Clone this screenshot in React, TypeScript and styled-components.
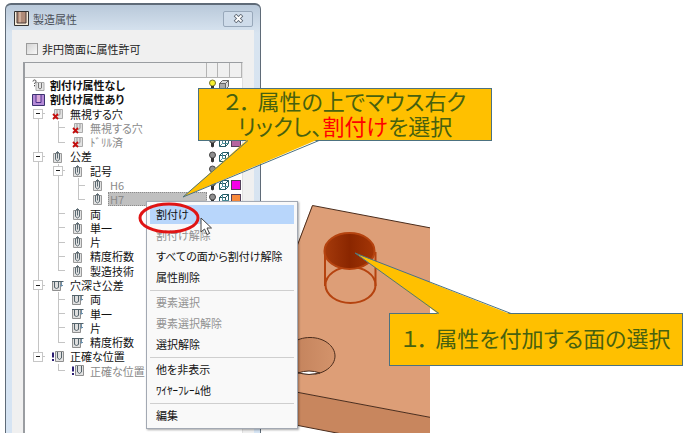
import React from 'react';
import styled, { createGlobalStyle, css } from 'styled-components';

const GlobalStyle = createGlobalStyle`
  * { box-sizing: border-box; }
  body { margin: 0; background: #fff; }
  body, button, input {
    font-family: 'Noto Sans CJK JP', 'Liberation Sans', sans-serif;
    font-size: 11px;
    font-feature-settings: 'palt';
  }
`;

const Stage = styled.main`
  position: relative;
  display: flex;
  align-items: stretch;
  min-height: 433px;
  padding: 3px 0 0 5px;
  overflow: hidden;
`;

/* ---------- dialog ---------- */

const Dialog = styled.section`
  flex: 0 0 256px;
  display: flex;
  flex-direction: column;
  padding: 0 6px;
  border: 1px solid #5f6b78;
  border-top-width: 2px;
  border-bottom: 0;
  border-radius: 6px 6px 0 0;
  background: linear-gradient(#b9c9da 0, #d8e4f0 28px, #d6e4f3 100%);
`;

const TitleBar = styled.header`
  display: flex;
  align-items: center;
  gap: 4px;
  height: 25px;
  padding: 2px 1px 0 2px;
  color: #4b5058;
`;

const Title = styled.h1`
  flex: 1;
  margin: 0;
  font-size: 11px;
  font-weight: 400;
`;

const CloseButton = styled.button`
  display: grid;
  place-items: center;
  width: 30px;
  height: 16px;
  padding: 0;
  border: 1px solid #98a8ba;
  border-radius: 2px;
  background: #cfdcea;
`;

const DialogBody = styled.div`
  flex: 1;
  display: flex;
  flex-direction: column;
  padding: 0 11px;
  background: #f0f0f0;
`;

const CheckLabel = styled.label`
  display: flex;
  align-items: center;
  gap: 4px;
  height: 32px;
  padding: 6px 0 0 3px;
  color: #222;
`;

const CheckBox = styled.input`
  appearance: none;
  width: 12px;
  height: 12px;
  margin: 0;
  border: 1px solid #9b9b9b;
  background: linear-gradient(135deg, #d4d4d4, #f8f8f8);
`;

const TreePanel = styled.div`
  flex: 1;
  border: 2px solid #9a9da1;
  border-top-width: 1px;
  border-right: 1px solid #e0e0e0;
  border-bottom: 0;
  background: #fff;
`;

const columns = css`
  display: grid;
  grid-template-columns: 1fr 11px 12px 12px;
`;

const TreeHeader = styled.div`
  ${columns}
  height: 15px;
  background: #f0f0f0;
  border-bottom: 1px solid #b4b4b4;
`;

const HeaderCell = styled.span`
  border-right: 1px solid #b4b4b4;
`;

const Tree = styled.ul`
  display: grid;
  grid-auto-rows: 1fr;
  min-height: 300px;
  margin: 0;
  padding: 0 0 0 3px;
  list-style: none;
`;

const Row = styled.li`
  ${columns}
  min-height: 0;
`;

const Node = styled.div`
  display: flex;
  align-items: stretch;
  min-width: 0;
`;

const IconCell = styled.span`
  flex: 0 0 20px;
  display: grid;
  place-items: center;
`;

const StateCell = styled.span`
  display: grid;
  place-items: center;
`;

type GuideKind = 'pass' | 'tee' | 'elbow' | 'none' | 'open' | 'openFirst' | 'openLast';

const line = 'linear-gradient(#c4c4c4, #c4c4c4)';
const branch = `${line} 10px 50% / 7px 1px no-repeat`;
const guides: Record<GuideKind, string> = {
  none: 'none',
  pass: `${line} 10px 0 / 1px 100% no-repeat`,
  tee: `${line} 10px 0 / 1px 100% no-repeat, ${branch}`,
  elbow: `${line} 10px 0 / 1px 50% no-repeat, ${branch}`,
  open: `${line} 10px 0 / 1px 100% no-repeat, ${branch}`,
  openFirst: `${line} 10px 100% / 1px 50% no-repeat, ${branch}`,
  openLast: `${line} 10px 0 / 1px 50% no-repeat, ${branch}`,
};

const Guide = styled.span<{ $kind: GuideKind }>`
  flex: 0 0 20px;
  display: grid;
  place-items: center;
  background: ${(p) => guides[p.$kind]};
`;

const Expander = styled.button`
  display: grid;
  place-items: center;
  width: 10px;
  height: 10px;
  padding: 0;
  border: 1px solid #c6c6c6;
  background: #fff;

  &::before {
    content: '';
    width: 4px;
    height: 1px;
    background: #222;
  }
`;

const Name = styled.span<{ $bold?: boolean; $dim?: boolean; $selected?: boolean }>`
  display: flex;
  align-items: center;
  flex: ${(p) => (p.$selected ? 1 : 'none')};
  height: 14px;
  padding-left: 2px;
  line-height: 14px;
  white-space: nowrap;
  font-weight: ${(p) => (p.$bold ? 700 : 400)};
  color: ${(p) => (p.$dim ? '#8a8a8a' : '#111')};
  ${(p) =>
    p.$selected &&
    css`
      background: #c0c0c0;
      outline: 1px dotted #8c8c8c;
      outline-offset: -1px;
    `}
`;

type IconKind = 'unset' | 'set' | 'ignore' | 'tolerance' | 'depth' | 'position';

function NodeIcon({ kind }: { kind: IconKind }) {
  switch (kind) {
    case 'unset':
      return (
        <svg width="13" height="13" viewBox="0 0 13 13" fill="none">
          <path d="M4 3.5h8v8H4z" fill="#e6e6e6" stroke="#aaa" />
          <path d="M6.5 4v5l1.5 1 1.5-1V4" stroke="#777" />
          <path d="M1 2.5C1 .5 4 .5 4 2.3 4 3.6 2.5 3.5 2.5 5M2.5 6v1.3" stroke="#444" />
        </svg>
      );
    case 'set':
      return (
        <svg width="13" height="13" viewBox="0 0 13 13" fill="none">
          <path d="M.5 1.5h12v11H.5z" fill="#b58ad6" stroke="#3c3270" />
          <path d="M4 2v7.5h5V2z" fill="#d9a9d8" />
          <path d="M4 2v7.5h5V2" stroke="#4c2f8c" />
        </svg>
      );
    case 'ignore':
      return (
        <svg width="12" height="12" viewBox="0 0 12 12" fill="none">
          <path d="M2.5 1.5h8v9h-8z" fill="#e2e2e2" stroke="#aaa" />
          <path d="M5 2v4.5l1.5 1L8 6.500V2" stroke="#999" />
          <path d="M1 6l5 5M6 6l-5 5" stroke="#c40d0d" strokeWidth="1.8" />
        </svg>
      );
    case 'tolerance':
      return (
        <svg width="10" height="12" viewBox="0 0 10 12" fill="none">
          <path d="M.5 2.500h8v9h-8z" fill="#e2e2e2" stroke="#9a9a9a" />
          <path d="M2.500 2.500v6l2 1.500 2-1.500v-6" stroke="#5b6a72" />
          <path d="M2.500 2.500l2-2 2 2M4.500 1v6.500" stroke="#5b6a72" />
        </svg>
      );
    case 'depth':
      return (
        <svg width="12" height="11" viewBox="0 0 12 11" fill="none">
          <path d="M.5 1.500h8v9h-8z" fill="#dedede" stroke="#8f8f8f" />
          <path d="M2.500 1.500v6l2 1 2-1v-6M0 1.500h11.500" stroke="#53626a" />
          <path d="M9.500 2v4.500M8 5.500h3" stroke="#6c8faa" />
        </svg>
      );
    default:
      return (
        <svg width="12" height="11" viewBox="0 0 12 11" fill="none">
          <path d="M3.500.5h8v10h-8z" fill="#e2e2e2" stroke="#8f8f8f" />
          <path d="M5.500 1v6l2 1.500 2-1.500V1" stroke="#53626a" />
          <path d="M1 1.500v5M1 8v2" stroke="#2a1c72" strokeWidth="2" />
        </svg>
      );
  }
}

function Bulb({ lit }: { lit?: boolean }) {
  return (
    <svg width="9" height="12" viewBox="0 0 9 12">
      <circle cx="4.500" cy="4" r="3" fill={lit ? '#f6ee2c' : '#8f8f8f'} stroke={lit ? '#77742a' : '#444'} />
      <path d="M3 7h3v3.500L4.500 11.500 3 10.500z" fill="#333" />
    </svg>
  );
}

function Cube({ solid }: { solid?: boolean }) {
  return (
    <svg width="12" height="12" viewBox="0 0 12 12" fill="none" stroke={solid ? '#666' : '#245a64'}>
      <path d="M1.500 4.500h6v6h-6z" fill={solid ? '#aaa' : '#fff'} />
      <path d="M1.500 4.500l3-3h6l-3 3zM10.500 1.500v6l-3 3v-6z" fill={solid ? '#dcdcdc' : 'none'} />
      {!solid && <path d="M4.500 1.500v6h6M4.500 7.500l-3 3" stroke="#4a8d98" />}
    </svg>
  );
}

const Swatch = styled.span<{ $color: string }>`
  width: 10px;
  height: 10px;
  border: 1px solid #54405a;
  background: ${(p) => p.$color};
`;

interface Item {
  name: string;
  icon: IconKind;
  path: GuideKind[];
  bold?: boolean;
  dim?: boolean;
  selected?: boolean;
  color?: string;
}

const items: Item[] = [
  { name: '割付け属性なし', icon: 'unset', path: [], bold: true },
  { name: '割付け属性あり', icon: 'set', path: [], bold: true },
  { name: '無視する穴', icon: 'ignore', path: ['openFirst'] },
  { name: '無視する穴', icon: 'ignore', path: ['pass', 'tee'], dim: true, color: '#b565a0' },
  { name: 'ﾄﾞﾘﾙ済', icon: 'ignore', path: ['pass', 'elbow'], dim: true, color: '#b565a0' },
  { name: '公差', icon: 'tolerance', path: ['open'] },
  { name: '記号', icon: 'tolerance', path: ['pass', 'open'] },
  { name: 'H6', icon: 'tolerance', path: ['pass', 'pass', 'tee'], dim: true, color: '#f500e8' },
  { name: 'H7', icon: 'tolerance', path: ['pass', 'pass', 'elbow'], dim: true, selected: true, color: '#f98a3c' },
  { name: '両', icon: 'tolerance', path: ['pass', 'tee'] },
  { name: '単一', icon: 'tolerance', path: ['pass', 'tee'] },
  { name: '片', icon: 'tolerance', path: ['pass', 'tee'] },
  { name: '精度桁数', icon: 'tolerance', path: ['pass', 'tee'] },
  { name: '製造技術', icon: 'tolerance', path: ['pass', 'elbow'] },
  { name: '穴深さ公差', icon: 'depth', path: ['open'] },
  { name: '両', icon: 'depth', path: ['pass', 'tee'] },
  { name: '単一', icon: 'depth', path: ['pass', 'tee'] },
  { name: '片', icon: 'depth', path: ['pass', 'tee'] },
  { name: '精度桁数', icon: 'depth', path: ['pass', 'elbow'] },
  { name: '正確な位置', icon: 'position', path: ['openLast'] },
  { name: '正確な位置', icon: 'position', path: ['none', 'elbow'], dim: true },
];

function TreeRow({ item, first }: { item: Item; first: boolean }) {
  return (
    <Row role="treeitem" aria-level={item.path.length + 1} aria-selected={!!item.selected}>
      <Node>
        {item.path.map((kind, i) => (
          <Guide key={i} $kind={kind}>
            {kind.startsWith('open') && <Expander type="button" aria-label={item.name} aria-expanded />}
          </Guide>
        ))}
        <IconCell>
          <NodeIcon kind={item.icon} />
        </IconCell>
        <Name $bold={item.bold} $dim={item.dim} $selected={item.selected}>
          {item.name}
        </Name>
      </Node>
      <StateCell>
        <Bulb lit={first} />
      </StateCell>
      <StateCell>
        <Cube solid={first} />
      </StateCell>
      <StateCell>{item.color && <Swatch $color={item.color} />}</StateCell>
    </Row>
  );
}

/* ---------- model view ---------- */

const ModelView = styled.svg`
  flex: none;
  align-self: flex-end;
  display: block;
`;

function Model() {
  return (
    <ModelView width="169" height="233" viewBox="261 200 169 233" fill="none" stroke="#4a2c1c">
      <defs>
        <linearGradient id="face" x1="0" x2="1">
          <stop offset="0" stopColor="#a53a0b" />
          <stop offset=".5" stopColor="#8a2600" />
          <stop offset="1" stopColor="#a43606" />
        </linearGradient>
        <linearGradient id="bore" x1="0" x2="1">
          <stop offset="0" stopColor="#c07f59" />
          <stop offset="1" stopColor="#d3936b" />
        </linearGradient>
      </defs>
      <path d="M312 205.500L431 228v189.500L280 389v-98z" fill="#dd9e77" stroke="none" />
      <path d="M280 389l151 28.500V434h-89l-62-12z" fill="#c8865e" stroke="none" />
      <path d="M280 291l32.500-85.500L431 228M280 389l151 28.500M280 422l62 12" />
      <path d="M335 356c0 10-11 18.500-25 18.500S285 366 285 356s11-18.500 25-18.500 25 8.500 25 18.500z" fill="url(#bore)" />
      <path d="M298 373q11-4 22 0-11 3-22 0z" fill="#fff" />
      <g stroke="#b5430f" strokeWidth="2">
        <path d="M325 252v34M375.500 252v34" />
        <ellipse cx="350.500" cy="285" rx="25" ry="18" />
        <ellipse cx="349.500" cy="251" rx="25" ry="18" fill="url(#face)" />
      </g>
    </ModelView>
  );
}

/* ---------- context menu ---------- */

const Menu = styled.div`
  position: absolute;
  left: 146px;
  top: 201px;
  display: flex;
  flex-direction: column;
  width: 152px;
  padding: 3px 3px 1px;
  border: 1px solid #a3a9b3;
  background: #f9f9f9;
  box-shadow: 1px 1px 2px rgba(0, 0, 0, 0.35);
`;

const MenuItem = styled.button<{ $active?: boolean }>`
  height: 21px;
  padding: 0 6px 3px;
  border: 0;
  background: ${(p) => (p.$active ? 'linear-gradient(#b8d6fb, #b8d6fb) 0 0 / 100% 19px no-repeat' : 'none')};
  text-align: left;
  line-height: 18px;
  white-space: nowrap;
  color: #111;

  &:disabled {
    color: #929292;
  }
`;

const MenuRule = styled.hr`
  width: 100%;
  height: 1px;
  margin: 1px 0 2px;
  border: 0;
  background: #cfcfcf;
`;

const menu: ({ label: string; off?: boolean; active?: boolean } | null)[] = [
  { label: '割付け', active: true },
  { label: '割付け解除', off: true },
  { label: 'すべての面から割付け解除' },
  { label: '属性削除' },
  null,
  { label: '要素選択', off: true },
  { label: '要素選択解除', off: true },
  { label: '選択解除' },
  null,
  { label: '他を非表示' },
  { label: 'ﾜｲﾔｰﾌﾚｰﾑ他' },
  null,
  { label: '編集' },
];

/* ---------- annotations ---------- */

const Overlay = styled.svg<{ $x: number; $y: number }>`
  position: absolute;
  left: ${(p) => p.$x}px;
  top: ${(p) => p.$y}px;
  pointer-events: none;
`;

const Callout = styled.p<{ $x: number; $y: number }>`
  position: absolute;
  left: ${(p) => p.$x}px;
  top: ${(p) => p.$y}px;
  display: flex;
  flex-direction: column;
  align-items: center;
  justify-content: center;
  width: 294px;
  height: 53px;
  margin: 0;
  padding-bottom: 4px;
  border: 1px solid #4c7280;
  background: #ffc000;
  color: #47610f;
  font-size: 22px;
  line-height: 25px;
  white-space: nowrap;
`;

const CalloutLine = styled.span`
  display: block;
`;

const StepNumber = styled.span`
  margin-right: 6px;
`;

const Emphasis = styled.em`
  font-style: normal;
  color: #ff0000;
`;

export default function App() {
  return (
    <>
      <GlobalStyle />
      <Stage>
        <Dialog aria-label="製造属性">
          <TitleBar>
            <svg width="15" height="15" viewBox="0 0 15 15">
              <path d="M.5.5h14v14H.5z" fill="#f5ead8" stroke="#333" />
              <path d="M3 1h9v11H3z" fill="#b08b78" />
              <path d="M5 1h2v11H5z" fill="#cfaf9c" />
              <path d="M3 1v11h9V1" fill="none" stroke="#4a3b38" />
            </svg>
            <Title>製造属性</Title>
            <CloseButton type="button" aria-label="閉じる">
              <svg width="11" height="9" viewBox="0 0 11 9" fill="none">
                <path d="M2 1l7 7M9 1L2 8" stroke="#5a6470" strokeWidth="3.600" />
                <path d="M2.500 1.500l6 6M8.500 1.500l-6 6" stroke="#fff" strokeWidth="1.800" />
              </svg>
            </CloseButton>
          </TitleBar>
          <DialogBody>
            <CheckLabel>
              <CheckBox type="checkbox" />
              非円筒面に属性許可
            </CheckLabel>
            <TreePanel>
              <TreeHeader>
                <HeaderCell />
                <HeaderCell />
                <HeaderCell />
                <HeaderCell />
              </TreeHeader>
              <Tree role="tree">
                {items.map((item, i) => (
                  <TreeRow key={i} item={item} first={i === 0} />
                ))}
              </Tree>
            </TreePanel>
          </DialogBody>
        </Dialog>
        <Model />

        <Menu role="menu">
          {menu.map((m, i) =>
            m ? (
              <MenuItem key={i} type="button" role="menuitem" disabled={m.off} $active={m.active}>
                {m.label}
              </MenuItem>
            ) : (
              <MenuRule key={i} />
            ),
          )}
        </Menu>

        <Callout $x={198} $y={88}>
          <CalloutLine>
            <StepNumber>２．</StepNumber>属性の上でマウス右ク
          </CalloutLine>
          <CalloutLine>
            リックし、<Emphasis>割付け</Emphasis>を選択
          </CalloutLine>
        </Callout>
        <Overlay $x={182} $y={139} width="140" height="60" viewBox="182 139 140 60">
          <path d="M248 139L183 197 319 139z" fill="#ffc000" />
          <path d="M248 140.500L183 197l136-56.500" fill="none" stroke="#4c7280" />
        </Overlay>

        <Callout $x={389} $y={313}>
          <CalloutLine>
            <StepNumber>１．</StepNumber>属性を付加する面の選択
          </CalloutLine>
        </Callout>
        <Overlay $x={353} $y={251} width="160" height="64" viewBox="353 251 160 64">
          <path d="M439 314.500L355 253l156 61.500z" fill="#ffc000" />
          <path d="M439 313.500L355 253l156 60.500" fill="none" stroke="#4c7280" />
        </Overlay>

        <Overlay $x={138} $y={201} width="62" height="34" viewBox="138 201 62 34">
          <ellipse cx="169" cy="218" rx="29" ry="14" fill="none" stroke="#e01414" strokeWidth="3" />
        </Overlay>
        <Overlay $x={200} $y={217} width="13" height="19" viewBox="0 0 13 19">
          <path d="M1 1v14l3.500-3 2.500 5.500 2.500-1L7 11h4.500z" fill="#fff" stroke="#444" />
        </Overlay>
      </Stage>
    </>
  );
}
